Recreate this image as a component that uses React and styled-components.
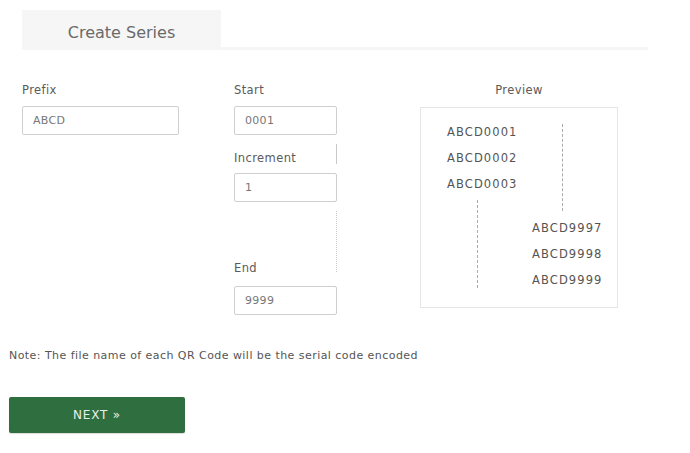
import React from 'react'
import styled, { createGlobalStyle } from 'styled-components'

const GlobalStyle = createGlobalStyle`
  body {
    margin: 0;
    background: #fff;
    font-family: "DejaVu Sans", "Noto Sans", sans-serif;
  }
`

const Page = styled.div`
  width: 690px;
  height: 453px;
  padding: 10px 0 0 9px;
  box-sizing: border-box;
`

const Header = styled.div`
  display: flex;
  width: 626px;
  margin-left: 13px;
`

const Tab = styled.div`
  width: 199px;
  height: 40px;
  background: #f6f6f6;
  color: #6a6a6a;
  font-size: 16px;
  display: flex;
  align-items: center;
  justify-content: center;
  padding-top: 4px;
  box-sizing: border-box;
`

const HeaderRule = styled.div`
  flex: 1;
  align-self: flex-end;
  height: 3px;
  background: #f5f5f5;
`

const Form = styled.div`
  display: flex;
  margin: 33px 0 0 13px;
`

const Column = styled.div`
  display: flex;
  flex-direction: column;
  width: ${(p) => p.$width}px;
  margin-right: ${(p) => p.$gap || 0}px;
`

const Label = styled.div`
  font-size: 11.5px;
  letter-spacing: 0.4px;
  line-height: 14px;
  color: #5a5a5a;
  white-space: nowrap;
  margin-bottom: ${(p) => p.$after ?? 9}px;
  text-align: ${(p) => (p.$center ? 'center' : 'left')};
`

const Input = styled.div`
  height: 29px;
  border: 1px solid #cfcfcf;
  border-radius: 2px;
  box-sizing: border-box;
  padding-left: 10px;
  display: flex;
  align-items: center;
  font-size: 11px;
  letter-spacing: 0.3px;
  color: #777;
`

const ConnectorRow = styled.div`
  display: flex;
  justify-content: space-between;
  align-items: flex-end;
  height: ${(p) => p.$height}px;
  margin: 9px 0 ${(p) => p.$after}px;
`

const Connector = styled.div`
  align-self: stretch;
  border-right: 1px ${(p) => (p.$dotted ? 'dotted' : 'solid')} #c8c8c8;
`

const PreviewBox = styled.div`
  height: 201px;
  border: 1px solid #e6e6e6;
  box-sizing: border-box;
  padding: 11px 0 0 26px;
  display: grid;
  grid-template-columns: 85px 1fr;
  grid-template-rows: 26px 26px 26px 18px 26px 26px 26px;
`

const Code = styled.div`
  grid-column: ${(p) => p.$col};
  grid-row: ${(p) => p.$row};
  font-size: 11.5px;
  letter-spacing: 1.1px;
  color: #555;
  line-height: 26px;
`

const Dash = styled.div`
  grid-column: ${(p) => p.$col};
  grid-row: ${(p) => p.$rows};
  margin: ${(p) => p.$top}px 0 ${(p) => p.$bottom}px 30px;
  border-left: 1px dashed #aaa;
`

const Note = styled.div`
  margin-top: 34px;
  font-size: 11px;
  letter-spacing: 0.45px;
  color: #555;
`

const NextButton = styled.button`
  margin-top: 35px;
  width: 176px;
  height: 36px;
  border: none;
  border-radius: 2px;
  background: #2f6e3f;
  color: #e8f0ea;
  font-family: inherit;
  font-size: 12px;
  letter-spacing: 0.8px;
  cursor: pointer;
  box-shadow: 0 1px 1px rgba(0, 0, 0, 0.15);
`

const first = ['ABCD0001', 'ABCD0002', 'ABCD0003']
const last = ['ABCD9997', 'ABCD9998', 'ABCD9999']

export default function App() {
  return (
    <Page>
      <GlobalStyle />
      <Header>
        <Tab>Create Series</Tab>
        <HeaderRule />
      </Header>

      <Form>
        <Column $width={157} $gap={55}>
          <Label>Prefix</Label>
          <Input>ABCD</Input>
        </Column>

        <Column $width={103} $gap={83}>
          <Label>Start</Label>
          <Input>0001</Input>
          <ConnectorRow $height={20} $after={9}>
            <Label $after={-1}>Increment</Label>
            <Connector />
          </ConnectorRow>
          <Input>1</Input>
          <ConnectorRow $height={61} $after={14}>
            <Label $after={-3}>End</Label>
            <Connector $dotted />
          </ConnectorRow>
          <Input>9999</Input>
        </Column>

        <Column $width={198}>
          <Label $center $after={10}>Preview</Label>
          <PreviewBox>
            {first.map((c, i) => (
              <Code key={c} $col={1} $row={i + 1}>{c}</Code>
            ))}
            <Dash $col={2} $rows="1 / 5" $top={5} $bottom={4} />
            <Dash $col={1} $rows="4 / 8" $top={3} $bottom={5} />
            {last.map((c, i) => (
              <Code key={c} $col={2} $row={i + 5}>{c}</Code>
            ))}
          </PreviewBox>
        </Column>
      </Form>

      <Note>Note: The file name of each QR Code will be the serial code encoded</Note>
      <NextButton>NEXT »</NextButton>
    </Page>
  )
}
